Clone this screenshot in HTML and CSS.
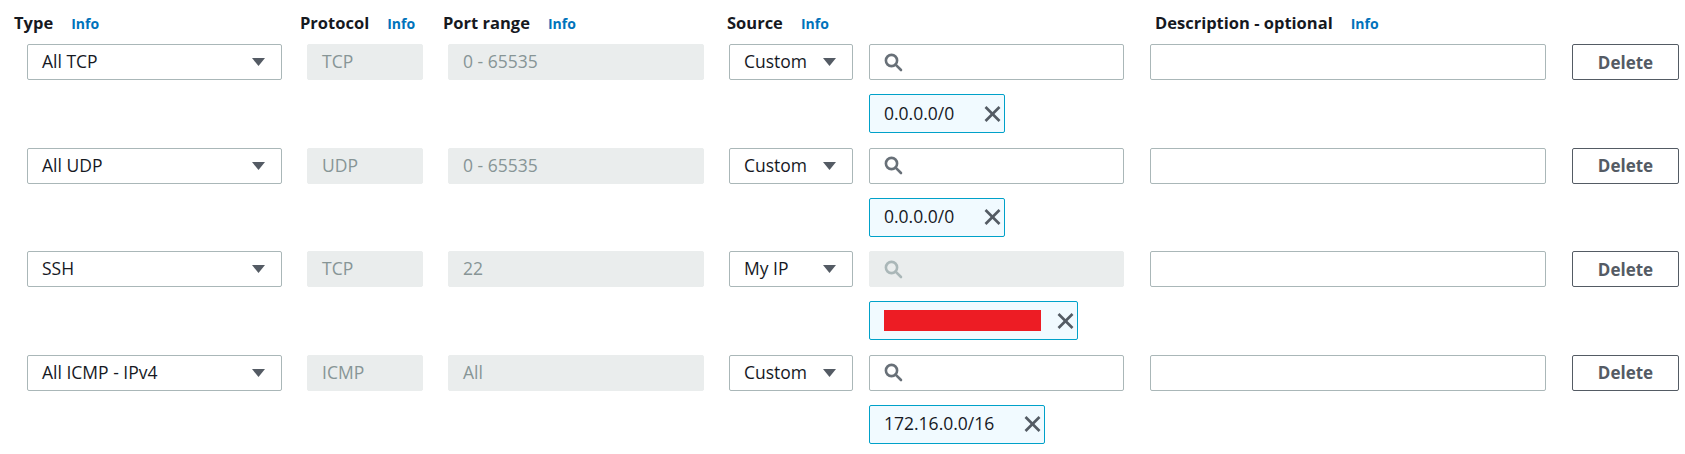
FILE: index.html
```html
<!DOCTYPE html>
<html lang="en">
<head>
<meta charset="utf-8">
<title>Inbound rules</title>
<link rel="stylesheet" href="styles.css">
</head>
<body>
<div class="rules">
  <div class="header">
    <div class="hcell h-type"><span class="hlabel">Type</span><a class="info">Info</a></div>
    <div class="hcell h-proto"><span class="hlabel">Protocol</span><a class="info">Info</a></div>
    <div class="hcell h-port"><span class="hlabel">Port range</span><a class="info">Info</a></div>
    <div class="hcell h-source"><span class="hlabel">Source</span><a class="info">Info</a></div>
    <div class="hcell h-desc"><span class="hlabel">Description - optional</span><a class="info">Info</a></div>
  </div>

  <div class="rule">
    <div class="select w-type"><span>All TCP</span><svg class="caret" width="13" height="8" viewBox="0 0 13 8"><polygon points="0,0 13,0 6.5,8"/></svg></div>
    <div class="field disabled w-proto">TCP</div>
    <div class="field disabled w-port">0 - 65535</div>
    <div class="select w-source"><span>Custom</span><svg class="caret" width="13" height="8" viewBox="0 0 13 8"><polygon points="0,0 13,0 6.5,8"/></svg></div>
    <div class="field search w-search"><svg class="mag" width="19" height="19" viewBox="0 0 19 19"><circle cx="7.5" cy="7.5" r="5.6"/><line x1="11.6" y1="11.6" x2="17" y2="17"/></svg></div>
    <div class="field w-desc"></div>
    <button class="delete">Delete</button>
    <div class="token"><span class="token-text">0.0.0.0/0</span><svg class="x" width="17" height="16" viewBox="0 0 17 16"><line x1="1.5" y1="1" x2="15.5" y2="15"/><line x1="15.5" y1="1" x2="1.5" y2="15"/></svg></div>
  </div>

  <div class="rule">
    <div class="select w-type"><span>All UDP</span><svg class="caret" width="13" height="8" viewBox="0 0 13 8"><polygon points="0,0 13,0 6.5,8"/></svg></div>
    <div class="field disabled w-proto">UDP</div>
    <div class="field disabled w-port">0 - 65535</div>
    <div class="select w-source"><span>Custom</span><svg class="caret" width="13" height="8" viewBox="0 0 13 8"><polygon points="0,0 13,0 6.5,8"/></svg></div>
    <div class="field search w-search"><svg class="mag" width="19" height="19" viewBox="0 0 19 19"><circle cx="7.5" cy="7.5" r="5.6"/><line x1="11.6" y1="11.6" x2="17" y2="17"/></svg></div>
    <div class="field w-desc"></div>
    <button class="delete">Delete</button>
    <div class="token"><span class="token-text">0.0.0.0/0</span><svg class="x" width="17" height="16" viewBox="0 0 17 16"><line x1="1.5" y1="1" x2="15.5" y2="15"/><line x1="15.5" y1="1" x2="1.5" y2="15"/></svg></div>
  </div>

  <div class="rule">
    <div class="select w-type"><span>SSH</span><svg class="caret" width="13" height="8" viewBox="0 0 13 8"><polygon points="0,0 13,0 6.5,8"/></svg></div>
    <div class="field disabled w-proto">TCP</div>
    <div class="field disabled w-port">22</div>
    <div class="select w-source"><span>My IP</span><svg class="caret" width="13" height="8" viewBox="0 0 13 8"><polygon points="0,0 13,0 6.5,8"/></svg></div>
    <div class="field search disabled w-search"><svg class="mag" width="19" height="19" viewBox="0 0 19 19"><circle cx="7.5" cy="7.5" r="5.6"/><line x1="11.6" y1="11.6" x2="17" y2="17"/></svg></div>
    <div class="field w-desc"></div>
    <button class="delete">Delete</button>
    <div class="token token-redacted"><span class="redacted"></span><svg class="x" width="17" height="16" viewBox="0 0 17 16"><line x1="1.5" y1="1" x2="15.5" y2="15"/><line x1="15.5" y1="1" x2="1.5" y2="15"/></svg></div>
  </div>

  <div class="rule">
    <div class="select w-type"><span>All ICMP - IPv4</span><svg class="caret" width="13" height="8" viewBox="0 0 13 8"><polygon points="0,0 13,0 6.5,8"/></svg></div>
    <div class="field disabled w-proto">ICMP</div>
    <div class="field disabled w-port">All</div>
    <div class="select w-source"><span>Custom</span><svg class="caret" width="13" height="8" viewBox="0 0 13 8"><polygon points="0,0 13,0 6.5,8"/></svg></div>
    <div class="field search w-search"><svg class="mag" width="19" height="19" viewBox="0 0 19 19"><circle cx="7.5" cy="7.5" r="5.6"/><line x1="11.6" y1="11.6" x2="17" y2="17"/></svg></div>
    <div class="field w-desc"></div>
    <button class="delete">Delete</button>
    <div class="token"><span class="token-text">172.16.0.0/16</span><svg class="x" width="17" height="16" viewBox="0 0 17 16"><line x1="1.5" y1="1" x2="15.5" y2="15"/><line x1="15.5" y1="1" x2="1.5" y2="15"/></svg></div>
  </div>
</div>
</body>
</html>
```

FILE: styles.css
```css
* { box-sizing: border-box; }

body {
  margin: 0;
  background: #ffffff;
  font-family: "Open Sans", "Noto Sans", Arial, sans-serif;
  font-size: 17.5px;
  color: #16191f;
}

.rules {
  padding-top: 11px;
}

.header {
  display: flex;
  align-items: baseline;
  padding-left: 14px;
  height: 33px;
  line-height: 23px;
}

.hcell {
  display: flex;
  align-items: baseline;
  flex: none;
}
.h-type { width: 286px; }
.h-proto { width: 143px; }
.h-port { width: 284px; }
.h-source { width: 428px; }

.hlabel {
  font-weight: 700;
  font-size: 16.5px;
  color: #16191f;
}

.info {
  margin-left: 18px;
  font-size: 14px;
  font-weight: 700;
  color: #0073bb;
}

.rule {
  display: grid;
  grid-template-columns: 280px 141px 281px 140px 281px 422px 107px;
  grid-template-rows: 36px 39px;
  row-gap: 14px;
  padding-left: 27px;
  margin-bottom: 14.5px;
}

.select,
.field {
  height: 36px;
  border: 1px solid #aab7b8;
  border-radius: 2px;
  background: #ffffff;
  display: flex;
  align-items: center;
  padding: 0 14px;
  line-height: 1;
}

.select {
  justify-content: space-between;
  padding-right: 16px;
}

.caret { fill: #545b64; flex: none; }

.field.disabled {
  background: #eaeded;
  border-color: #eaeded;
  color: #879596;
}

.w-type { width: 255px; }
.w-proto { width: 116px; }
.w-port { width: 256px; }
.w-source { width: 124px; }
.w-search { width: 255px; }
.w-desc { width: 396px; }

.mag {
  fill: none;
  stroke: #687078;
  stroke-width: 2.6;
  stroke-linecap: round;
}
.field.disabled .mag { stroke: #aab7b8; }

.delete {
  width: 107px;
  height: 36px;
  border: 1px solid #545b64;
  border-radius: 2px;
  background: #ffffff;
  font-family: inherit;
  font-size: 17px;
  font-weight: 700;
  color: #545b64;
  padding: 0;
}

.token {
  grid-column: 5;
  grid-row: 2;
  justify-self: start;
  height: 39px;
  display: flex;
  align-items: center;
  padding: 0 3px 0 14px;
  background: #f1faff;
  border: 1px solid #00a1c9;
  border-radius: 2px;
  line-height: 1;
}

.token-text { margin-right: 30px; }

.x {
  fill: none;
  stroke: #545b64;
  stroke-width: 2.6;
  flex: none;
}

.redacted {
  width: 157px;
  height: 21px;
  background: #ed1c24;
  margin-right: 16px;
}
```
